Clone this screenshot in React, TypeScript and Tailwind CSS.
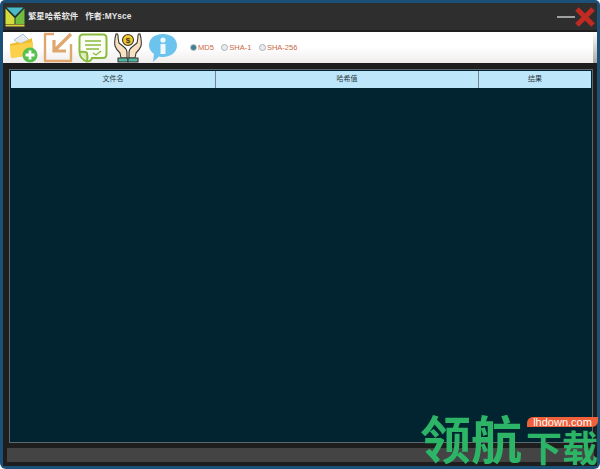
const sans = 'font-["Liberation_Sans","Noto_Sans_CJK_SC",sans-serif]';

const Logo = () => (
  <svg width="20" height="20" viewBox="0 0 20 20">
    <rect width="20" height="20" fill="#20322c" />
    <path d="M1.500 0.500 H18.500 L10 9 Z" fill="#4cb9c9" />
    <path d="M0.500 1.500 L9.500 11 V17 H0.500 Z" fill="#d3dc3c" />
    <path d="M19.500 1.500 L10.500 11 V17 H19.500 Z" fill="#72bd3f" />
    <rect x="0.500" y="17.500" width="19" height="2" fill="#e3cf3a" />
  </svg>
);

const FolderIcon = () => (
  <svg width="29" height="30" viewBox="0 0 29 30">
    <path d="M5 7 L14 1 L20 7 L10 11 Z" fill="#e6ebf2" stroke="#8aa0c0" strokeWidth="0.600" />
    <path d="M1 11 L9 9 L12 10.500 L23 5 L24 22 L2 25 Z" fill="#f2bd2c" />
    <path d="M1 13 L24 9 V22 L2 25 Z" fill="#fbd04a" />
    <circle cx="21" cy="22" r="7.500" fill="#56c04c" />
    <path d="M21 17.500 V26.500 M16.500 22 H25.500" stroke="#fff" strokeWidth="2.800" />
  </svg>
);

const ImportIcon = () => (
  <svg width="30" height="31" viewBox="0 0 30 31" fill="none" stroke="#dfa76e" strokeWidth="2.400">
    <path d="M11 2 H2 V29 H28 V12" strokeLinejoin="round" />
    <path d="M28 2 L12 18 M11 8 V19 H23" strokeWidth="3.200" />
  </svg>
);

const NoteIcon = () => (
  <svg width="30" height="30" viewBox="0 0 30 30" fill="none" stroke="#8abb41" strokeWidth="2">
    <path d="M5 1.500 H25 Q28.500 1.500 28.500 5 V21 Q28.500 25 25 25 H14 Q13 28.500 9 28.500 Q2 26 1.500 19 V5 Q1.500 1.500 5 1.500 Z" fill="#fbfdf5" />
    <path d="M1.500 19 Q8 18 9 20 Q10 24 9 28.500" fill="#dcebb8" />
    <path d="M7 8 H23 M7 12 H23 M8 16 H21" strokeWidth="1.600" />
    <path d="M15 20 L18 22 L23 18" strokeWidth="1.400" />
  </svg>
);

const HandsIcon = () => (
  <svg width="30" height="30" viewBox="0 0 30 30" stroke="#3b3a36" strokeWidth="1.100" strokeLinejoin="round">
    <circle cx="15" cy="7" r="5.500" fill="#f4c629" />
    <text x="15" y="10" fontSize="8" textAnchor="middle" fill="#3b3a36" stroke="none" fontFamily="Liberation Sans" fontWeight="700">$</text>
    <path d="M3 1 Q1 8 2 13 Q3 16 7 20 L8 25 H14 V20 Q14 16 11 14 L6 10 Q5 6 5 2 Q4 0.500 3 1 Z" fill="#f9e0c0" />
    <path d="M27 1 Q29 8 28 13 Q27 16 23 20 L22 25 H16 V20 Q16 16 19 14 L24 10 Q25 6 25 2 Q26 0.500 27 1 Z" fill="#f9e0c0" />
    <rect x="5" y="25" width="10" height="4" fill="#52b5a6" />
    <rect x="15" y="25" width="10" height="4" fill="#52b5a6" />
  </svg>
);

const InfoIcon = () => (
  <svg width="30" height="30" viewBox="0 0 30 30">
    <path d="M15 1 C24 1 29 6 29 12.500 C29 19 23 24 15 24 C13 24 12 24 11 23.500 L5 29 L6 21 C3 19 1 16 1 12.500 C1 6 6 1 15 1 Z" fill="#6cc3ee" />
    <rect x="12.500" y="11" width="5" height="10" fill="#eef8fd" />
    <circle cx="15" cy="7" r="2.600" fill="#eef8fd" />
  </svg>
);

const Radio = ({ label, checked }: { label: string; checked?: boolean }) => (
  <div className="flex items-center gap-px">
    <span className="flex h-[7px] w-[7px] items-center justify-center rounded-full border border-[#a9b2b8] bg-[#e8ecef]">
      {checked && <span className="h-[5px] w-[5px] rounded-full bg-[#3e7f94]" />}
    </span>
    <span className="text-[7.5px] leading-none text-[#c9683f]">{label}</span>
  </div>
);

export default function App() {
  return (
    <div className={`relative h-[469px] w-[600px] overflow-hidden bg-white ${sans}`}>
      <div className="flex h-full flex-col rounded-t-[5px] rounded-b-[6px] bg-[#1b5078] p-[3px]">
        <div className="flex h-full flex-col bg-[#1e1e1e]">
          {/* title bar */}
          <div className="flex h-[27px] shrink-0 items-center bg-[#2e2e2e] pr-[3px] pl-[2px]">
            <Logo />
            <span className="ml-[3px] text-[8.4px] font-bold text-[#e6e6e6]">繁星哈希软件</span>
            <span className="ml-[7px] text-[8.4px] font-bold text-[#e6e6e6]">作者:MYsce</span>
            <div className="ml-auto flex items-center">
              <div className="h-[2px] w-[18px] bg-[#a0a0a0]" />
              <svg width="20" height="20" viewBox="0 0 20 20" stroke="#c12a22" strokeWidth="5" className="mr-[-1px]">
                <path d="M2 2 L18 18 M18 2 L2 18" />
              </svg>
            </div>
          </div>

          {/* toolbar */}
          <div className="mt-[2px] flex h-[31px] shrink-0 items-center bg-gradient-to-b from-white via-white to-[#f0ecec] pl-[6px]">
            <div className="flex items-center gap-[5px]">
              <FolderIcon />
              <ImportIcon />
              <NoteIcon />
              <HandsIcon />
              <InfoIcon />
            </div>
            <div className="ml-[12px] flex items-center gap-[7.5px]">
              <Radio label="MD5" checked />
              <Radio label="SHA-1" />
              <Radio label="SHA-256" />
            </div>
            <div className="ml-auto h-full w-[4px] bg-gradient-to-b from-white to-[#a8a8a8]" />
          </div>

          {/* file table */}
          <div className="mt-[6px] mr-[4px] ml-[6px] flex min-h-0 flex-1 flex-col border border-[#5a6a70] bg-[#012430] px-px pt-px">
            <div className="flex h-[17px] shrink-0 bg-[#bde6fb] text-[7px] text-[#2c3a40]">
              <div className="flex w-[205px] items-center justify-center border-r border-[#6d8795]">文件名</div>
              <div className="flex w-[263px] items-center justify-center border-r border-[#6d8795]">哈希值</div>
              <div className="flex flex-1 items-center justify-center">结果</div>
            </div>
          </div>

          {/* status bar */}
          <div className="mt-[5px] mr-[3px] mb-[4px] ml-[4px] h-[14px] shrink-0 bg-[#444444]" />
        </div>
      </div>

      {/* watermark */}
      <div className='absolute top-[411px] left-[420px] flex items-start font-bold text-[#2cb566] font-["Noto_Sans_CJK_SC",sans-serif]'>
        <span className="text-[51px] leading-[52px]">领航</span>
        <span className="mt-[17px] ml-[4px] text-[36px] leading-[36px]">下载</span>
      </div>
      <div className="absolute top-[417px] left-[527px] flex h-[10px] w-[71px] items-center justify-center rounded-tl-[6px] rounded-br-[6px] bg-[#f0603a] text-[11px] leading-none text-white">
        lhdown.com
      </div>
    </div>
  );
}
